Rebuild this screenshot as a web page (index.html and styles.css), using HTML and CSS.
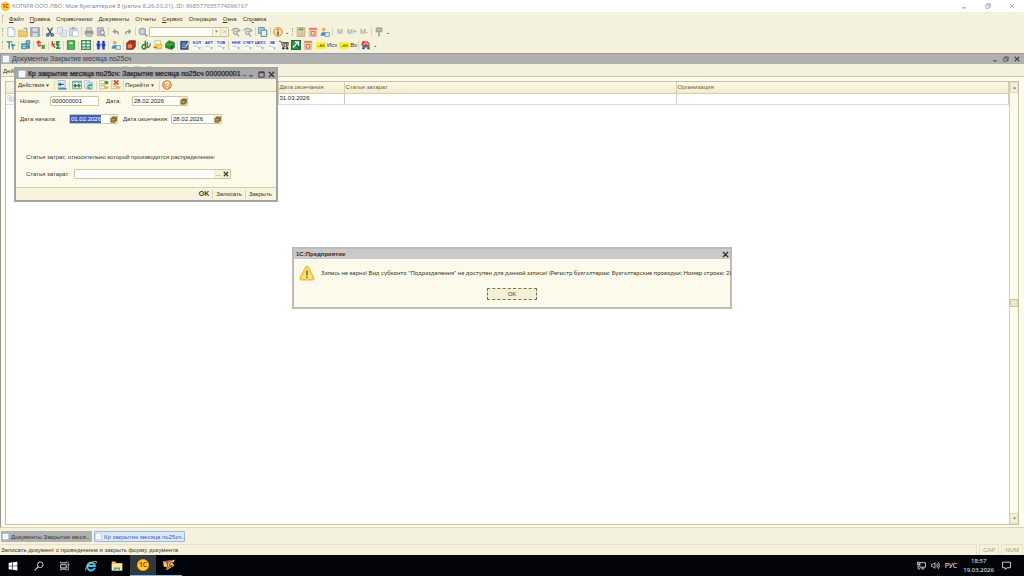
FILE: index.html
```html
<!DOCTYPE html>
<html lang="ru">
<head>
<meta charset="utf-8">
<title>1С:Предприятие</title>
<link rel="stylesheet" href="styles.css">
</head>
<body>
<svg class="sprite" aria-hidden="true">
  <defs>
    <symbol id="logo" viewBox="0 0 16 16"><circle cx="8" cy="8" r="7.500" fill="#fbd02a" stroke="#e8a51c"/><text x="8" y="11" text-anchor="middle" font-size="9" font-weight="bold" fill="#d9261c">1С</text></symbol>
    <symbol id="doc" viewBox="0 0 16 16"><rect x="1" y="1" width="14" height="14" rx="1" fill="#fff" stroke="#86b0d6"/><path d="M3 5h10M3 8h10M3 11h10" stroke="#d5e4f2"/></symbol>
    <symbol id="page" viewBox="0 0 16 16"><path d="M3 1h8l3 3v11H3z" fill="#f8fbff" stroke="#8aa5c0"/><path d="M11 1v3h3" fill="none" stroke="#8aa5c0"/></symbol>
    <symbol id="open" viewBox="0 0 16 16"><path d="M1 5h5l1 2h8v8H1z" fill="#f4cc63" stroke="#c59a38"/><path d="M9 4c1-3 4-3 5-1v3" fill="none" stroke="#4d79a8" stroke-width="1.500"/></symbol>
    <symbol id="save" viewBox="0 0 16 16"><path d="M1 1h14v14H1z" fill="#9eacb6" stroke="#7e8e99"/><path d="M4 2h8v5H4zM4 10h8v5H4z" fill="#d7dfe2"/></symbol>
    <symbol id="cut" viewBox="0 0 16 16"><path d="M4 1l6 10M12 1L6 11" stroke="#46576a" stroke-width="2"/><circle cx="4.500" cy="12.500" r="2" fill="none" stroke="#2f5a86" stroke-width="2"/><circle cx="11.500" cy="12.500" r="2" fill="none" stroke="#2f5a86" stroke-width="2"/></symbol>
    <symbol id="copy" viewBox="0 0 16 16"><path d="M1 1h8v10H1zM6 5h9v10H6z" fill="#eff4f8" stroke="#a3b5c5"/><path d="M8 9h5M8 12h5" stroke="#bccbd8"/></symbol>
    <symbol id="paste" viewBox="0 0 16 16"><path d="M1 2h12v12H1z" fill="#ced8df" stroke="#9eafbd"/><path d="M5 0h4v4H5z" fill="#9eafbd"/><path d="M6 6h9v9H6z" fill="#fff" stroke="#a3b5c5"/></symbol>
    <symbol id="print" viewBox="0 0 16 16"><path d="M4 1h8v5H4z" fill="#d8d8d0" stroke="#999"/><path d="M1 6h14v6H1z" fill="#9b9b94"/><path d="M4 10h8v5H4z" fill="#c9c9c2" stroke="#999"/></symbol>
    <symbol id="preview" viewBox="0 0 16 16"><path d="M2 1h10v13H2z" fill="#bac0c8" stroke="#8d97a3"/><circle cx="10" cy="9" r="3.500" fill="#dfe3e5" stroke="#7f8b98" stroke-width="1.500"/><path d="M12 12l3 3" stroke="#7f8b98" stroke-width="2"/></symbol>
    <symbol id="undo" viewBox="0 0 16 16"><path d="M3 7h6c4 0 4 3 3 6M7 3L3 7l4 4" fill="none" stroke="#95968d" stroke-width="2.500"/></symbol>
    <symbol id="find" viewBox="0 0 16 16"><circle cx="7" cy="7" r="5" fill="#cbd3d8" stroke="#9aa6ae" stroke-width="2"/><path d="M11 11l4 4" stroke="#9aa6ae" stroke-width="3"/></symbol>
    <symbol id="findnext" viewBox="0 0 16 16"><path d="M1 6c3-5 10-5 13 0M11 3l3 3-4 1" fill="none" stroke="#9b9b93" stroke-width="2"/><circle cx="7" cy="9" r="3" fill="#d6dcd9" stroke="#9b9b93" stroke-width="1.500"/><path d="M9 11l4 4" stroke="#9b9b93" stroke-width="2"/></symbol>
    <symbol id="windows" viewBox="0 0 16 16"><path d="M1 1h9v9H1z" fill="#bcd3e6" stroke="#5482a8" stroke-width="1.500"/><path d="M5 5h9v10H5z" fill="#e9f4fb" stroke="#47799f" stroke-width="1.500"/></symbol>
    <symbol id="info" viewBox="0 0 16 16"><circle cx="8" cy="8" r="7" fill="#f6d9a4" stroke="#c99143" stroke-width="1.500"/><path d="M8 7v6M8 3v2" stroke="#7c5830" stroke-width="2.500"/></symbol>
    <symbol id="help" viewBox="0 0 16 16"><circle cx="8" cy="8" r="7" fill="#f0ae6b" stroke="#c77e42" stroke-width="1.500"/><path d="M5.500 6c0-4 6-3 5 0-.5 1.500-2.500 1.500-2.500 4M8 11.500v2" fill="none" stroke="#fff" stroke-width="1.800"/></symbol>
    <symbol id="calc" viewBox="0 0 16 16"><path d="M2 1h12v14H2z" fill="#eee2bd" stroke="#a08d59"/><path d="M4 4h8" stroke="#6c9361" stroke-width="3"/><path d="M4 8h8M4 11h8M4 13h8" stroke="#a66f42" stroke-dasharray="2 1"/></symbol>
    <symbol id="calendar" viewBox="0 0 16 16"><path d="M2 2h12v13H2z" fill="#f7d9c2" stroke="#cf9478"/><path d="M2 3h12" stroke="#dd8263" stroke-width="3"/><path d="M5 7h6v6H5z" fill="none" stroke="#d15f37" stroke-width="1.500"/></symbol>
    <symbol id="user" viewBox="0 0 16 16"><circle cx="6" cy="4" r="3" fill="#e9ae58"/><path d="M1 14c0-8 9-8 10 0z" fill="#4b91bf"/><path d="M8 9h7v6H8z" fill="#ddeaf4" stroke="#477ba1"/></symbol>
    <symbol id="wrench" viewBox="0 0 16 16"><path d="M4 2h8v5H4zM8 6v9" fill="#c4c4bb" stroke="#a4a49b" stroke-width="2.500"/></symbol>
    <symbol id="tt" viewBox="0 0 16 16"><path d="M1 3h9M5 3v11M8 8h7M11 8v7M10 8V6" stroke="#3584a2" stroke-width="2" fill="none"/></symbol>
    <symbol id="blocks" viewBox="0 0 16 16"><path d="M1 6h8v8H1z" fill="#58a5c4" stroke="#2b7192"/><path d="M8 1h6v5H8z" fill="#80b9cd" stroke="#2b7192"/><path d="M10 7h4v7h-4z" fill="#397ea2"/><path d="M3 9h4M3 12h4" stroke="#fff"/></symbol>
    <symbol id="redgreen" viewBox="0 0 16 16"><path d="M1 5l3-3 4 3M4 2v7h4" fill="none" stroke="#df4b37" stroke-width="2.500"/><path d="M9 8l5 6M14 8l-5 6" stroke="#349a43" stroke-width="2.500"/></symbol>
    <symbol id="greenred" viewBox="0 0 16 16"><path d="M2 2v6l5 4M2 9l4-3" fill="none" stroke="#d7402d" stroke-width="2.500"/><path d="M14 3H9v5h5M8 13h7M11 3v10" fill="none" stroke="#279b47" stroke-width="2.500"/></symbol>
    <symbol id="book" viewBox="0 0 16 16"><path d="M2 1h12v14H2z" fill="#3fa64c" stroke="#277b36"/><path d="M5 3h6v4H5z" fill="#bde4b6"/><path d="M4 10h8M4 13h8" stroke="#87cf7e"/></symbol>
    <symbol id="sheet" viewBox="0 0 16 16"><path d="M1 1h14v14H1z" fill="#e8f4e4" stroke="#44824d" stroke-width="2"/><path d="M1 6h14M1 11h14M8 1v14" stroke="#3d9472" stroke-width="2"/></symbol>
    <symbol id="people" viewBox="0 0 16 16"><circle cx="4" cy="3" r="2" fill="#142dbb"/><circle cx="12" cy="3" r="2" fill="#142dbb"/><path d="M1 5h6v5H6v5H2v-5H1zM9 5h6v5h-1v5h-4v-5H9z" fill="#203dce"/></symbol>
    <symbol id="redbook" viewBox="0 0 16 16"><path d="M1 5l4-4h10v10l-4 4H1z" fill="#b8391e" stroke="#6c2117"/><path d="M3 7h7v6H3z" fill="#ed874f"/><path d="M5 3h9M11 5v9" stroke="#6c2117"/></symbol>
    <symbol id="dtkt" viewBox="0 0 16 16"><path d="M7 1v13H3c-3-5 1-8 4-6" fill="none" stroke="#268b35" stroke-width="2.500"/><path d="M10 3v6c0 4 5 2 5-4" fill="none" stroke="#268b35" stroke-width="2"/><path d="M8 12h5" stroke="#d05138" stroke-width="2"/></symbol>
    <symbol id="note" viewBox="0 0 16 16"><path d="M3 1h9v9H3z" fill="#f7f6e9" stroke="#a8ab95"/><path d="M5 7h9v7H5z" fill="#f1df38" stroke="#b8a735"/><path d="M1 12h5" stroke="#d0572c" stroke-width="2"/></symbol>
    <symbol id="cube" viewBox="0 0 16 16"><path d="M1 6l5-5 9 3v8l-5 3-9-3z" fill="#2a912c" stroke="#156219"/><path d="M1 6l8 2 6-4M9 8v7" stroke="#77ce5b" fill="none"/><path d="M9 9h3v5H9z" fill="#163c68"/></symbol>
    <symbol id="edit" viewBox="0 0 16 16"><path d="M1 2h12v13H1z" fill="#355d9e" stroke="#203c7c"/><path d="M3 6h6M3 9h5M3 12h8" stroke="#b9d2f1"/><path d="M8 10L14 2l2 2-7 8z" fill="#f2efd9" stroke="#777"/></symbol>
    <symbol id="cart" viewBox="0 0 16 16"><path d="M0 2h3l3 8h8l1-6H4M6 6h9M8 4v6M12 4v6" fill="none" stroke="#555951" stroke-width="1.500"/><circle cx="7" cy="13" r="2" fill="#333"/><circle cx="13" cy="13" r="2" fill="#333"/></symbol>
    <symbol id="greenedit" viewBox="0 0 16 16"><path d="M1 1h14v14H1z" fill="#29a241" stroke="#15712a" stroke-width="2"/><path d="M3 12l9-9M6 3h6v6" fill="none" stroke="#fff" stroke-width="2"/><path d="M8 8l5 5" stroke="#194a89" stroke-width="2"/></symbol>
    <symbol id="redcar" viewBox="0 0 16 16"><path d="M3 2l8 1 3 5-7 3-6-3z" fill="#d7443e" stroke="#a72e2d"/><path d="M2 11h12" stroke="#3d66a4" stroke-width="2"/><path d="M4 8l4-4 4 4" fill="none" stroke="#fff" stroke-width="1.500"/><circle cx="4" cy="13" r="2" fill="#3665a8"/><circle cx="12" cy="13" r="2" fill="#3665a8"/></symbol>
    <symbol id="saveclose" viewBox="0 0 16 16"><path d="M2 1h11v11H2z" fill="#e7f0f7" stroke="#81a0bb"/><path d="M3 7h8M6 5L3 7l3 2M2 14h13" fill="none" stroke="#2668a0" stroke-width="2"/></symbol>
    <symbol id="swap" viewBox="0 0 16 16"><path d="M1 2h14v12H1z" fill="#edf4ef" stroke="#6c9d9a" stroke-width="1.500"/><path d="M1 3h14" stroke="#6298b8" stroke-width="2"/><path d="M2 9h4M10 9h4M4 6l3 3-3 3M12 6L9 9l3 3" fill="none" stroke="#2b7b4b" stroke-width="2"/></symbol>
    <symbol id="refresh" viewBox="0 0 16 16"><path d="M1 1h8v12H1zM5 4h9v11H5z" fill="#edf5f8" stroke="#8ba8bd"/><path d="M12 9a3 3 0 1 0 0 3M12 6v3H9" fill="none" stroke="#34a35f" stroke-width="1.800"/></symbol>
    <symbol id="post" viewBox="0 0 16 16"><path d="M1 1h8v13H1z" fill="#f8f1d8" stroke="#c0aa6e"/><path d="M3 6h5M3 9h5" stroke="#7194b4"/><circle cx="12" cy="4" r="3" fill="#39a342"/><path d="M8 12h7" stroke="#e9b642" stroke-width="4"/></symbol>
    <symbol id="unpost" viewBox="0 0 16 16"><path d="M1 1h8v13H1z" fill="#f8f1d8" stroke="#c0aa6e"/><path d="M3 7h5M3 10h5" stroke="#7194b4"/><path d="M5 1l7 6M12 1L5 7" stroke="#d64a3e" stroke-width="2.500"/><path d="M8 12h7" stroke="#e9b642" stroke-width="4"/></symbol>
    <symbol id="pick" viewBox="0 0 16 16"><path d="M5 2h10v9H5zM2 5h10v9H2z" fill="#a68b36" stroke="#65521c" stroke-width="1.500"/><path d="M4 9h6" stroke="#f8ebb5" stroke-width="1.500"/></symbol>
    <symbol id="min" viewBox="0 0 16 16"><path d="M3 13h10" stroke="currentColor" stroke-width="2.500"/></symbol>
    <symbol id="max" viewBox="0 0 16 16"><path d="M2 2h12v12H2zM2 4h12" fill="none" stroke="currentColor" stroke-width="2"/></symbol>
    <symbol id="restore" viewBox="0 0 16 16"><path d="M2 5h9v9H2zM5 5V2h9v9h-3" fill="none" stroke="currentColor" stroke-width="1.800"/></symbol>
    <symbol id="close" viewBox="0 0 16 16"><path d="M2 2l12 12M14 2L2 14" stroke="currentColor" stroke-width="3"/></symbol>
    <symbol id="closethin" viewBox="0 0 16 16"><path d="M2 2l12 12M14 2L2 14" stroke="currentColor" stroke-width="1.500"/></symbol>
    <symbol id="warn" viewBox="0 0 32 32"><path d="M16 2q2 0 3 2l11 22q1 4-2 4H4q-3 0-2-4L13 4q1-2 3-2z" fill="#f9d44c" stroke="#d6a934" stroke-width="1.500"/><path d="M16 6L5 27h22z" fill="#fce27b"/><path d="M16 11v10M16 23v3" stroke="#776236" stroke-width="3"/></symbol>
    <symbol id="win" viewBox="0 0 16 16"><path d="M1 3l6-1v5.500H1zM8 2l7-1v6.500H8zM1 8.500h6V14l-6-1zM8 8.500h7V15l-7-1z" fill="#fff"/></symbol>
    <symbol id="search" viewBox="0 0 16 16"><circle cx="10" cy="6" r="4.500" fill="none" stroke="#ddd" stroke-width="1.500"/><path d="M7 9l-6 6" stroke="#ddd" stroke-width="1.700"/></symbol>
    <symbol id="taskview" viewBox="0 0 16 16"><path d="M1 1v2h9V1M1 6h9v5H1zM1 15v-2h9v2M13 1v3M13 8v7" fill="none" stroke="#ddd" stroke-width="1.500"/><path d="M12 5h3v2h-3z" fill="#ddd"/></symbol>
    <symbol id="ie" viewBox="0 0 16 16"><path d="M13 10.500A5.200 5.200 0 1 1 13.300 8H4" fill="none" stroke="#3cc0ee" stroke-width="2.600"/><path d="M1 14C-1 10 9 1 15 2c1 1 0 2-1 3" fill="none" stroke="#f3cf45" stroke-width="1.200"/></symbol>
    <symbol id="folder" viewBox="0 0 16 16"><path d="M1 2h5l1 2h8v10H1z" fill="#efbe4f"/><path d="M1 5h14v9H1z" fill="#fbe39a"/><path d="M4 14v-4h8v4h-2v-2H6v2z" fill="#3fa4dc"/></symbol>
    <symbol id="config" viewBox="0 0 16 16"><path d="M0 3l16-2-3 5 2 3-11 6 1-4-4-1z" fill="#f7da41"/><text x="8" y="10" text-anchor="middle" font-size="9" font-weight="bold" font-style="italic" fill="#8b247c">1С</text><path d="M1 4l12-2M4 13l9-5" stroke="#7d2a80" stroke-width="1.300"/></symbol>
    <symbol id="net" viewBox="0 0 16 16"><path d="M5 3h10v8H5zM8 14h5M10 11v3M1 2v4h3V2zM2 6v8h4" fill="none" stroke="#eee" stroke-width="1.400"/></symbol>
    <symbol id="sound" viewBox="0 0 16 16"><path d="M1 6h2l4-3v10l-4-3H1zM9 6q2 2 0 4M11 4q4 4 0 8M13 2q5 6 0 12" fill="none" stroke="#eee" stroke-width="1.300"/></symbol>
    <symbol id="bubble" viewBox="0 0 16 16"><path d="M1 2h14v10H9l-3 3v-3H1z" fill="none" stroke="#eee" stroke-width="1.500"/></symbol>
    <symbol id="down" viewBox="0 0 16 16"><path d="M3 5h10l-5 7z" fill="currentColor"/></symbol>
    <symbol id="up" viewBox="0 0 16 16"><path d="M3 12h10L8 5z" fill="currentColor"/></symbol>
    <symbol id="arrow" viewBox="0 0 16 8"><path d="M2 2h8M10 4h4l-2 3z" stroke="#b3bfdf" fill="#b3bfdf" stroke-width="1.500"/></symbol>
  </defs>
</svg>

<header class="titlebar">
  <svg class="ic9"><use href="#logo"/></svg>
  <h1 class="titlebar-text">КОПИЯ ООО ЛВО: Моя бухгалтерия 8 (релиз 8.26.03.01). ID: 968577655774096167</h1>
  <div class="titlebar-controls">
    <button aria-label="Свернуть"><svg class="ic6"><use href="#min"/></svg></button>
    <button aria-label="Восстановить"><svg class="ic6"><use href="#restore"/></svg></button>
    <button aria-label="Закрыть"><svg class="ic6"><use href="#closethin"/></svg></button>
  </div>
</header>

<nav class="menubar">
  <span class="grip"></span>
  <button><u>Ф</u>айл</button><button><u>П</u>равка</button><button>Справочники</button><button>Документы</button><button>Отчеты</button><button><u>С</u>ервис</button><button>Операции</button><button><u>О</u>кна</button><button>Сп<u>р</u>авка</button>
</nav>

<div class="toolbar">
  <span class="grip"></span>
  <button class="tool" aria-label="Новый"><svg><use href="#page"/></svg></button>
  <button class="tool" aria-label="Открыть"><svg><use href="#open"/></svg></button>
  <button class="tool" aria-label="Сохранить"><svg><use href="#save"/></svg></button>
  <span class="sep"></span>
  <button class="tool" aria-label="Вырезать"><svg><use href="#cut"/></svg></button>
  <button class="tool" aria-label="Копировать"><svg><use href="#copy"/></svg></button>
  <button class="tool" aria-label="Вставить"><svg><use href="#paste"/></svg></button>
  <span class="sep"></span>
  <button class="tool" aria-label="Печать"><svg><use href="#print"/></svg></button>
  <button class="tool" aria-label="Просмотр"><svg><use href="#preview"/></svg></button>
  <span class="sep"></span>
  <button class="tool small" aria-label="Отменить"><svg><use href="#undo"/></svg></button>
  <button class="tool small flip" aria-label="Вернуть"><svg><use href="#undo"/></svg></button>
  <span class="sep"></span>
  <button class="tool" aria-label="Найти"><svg><use href="#find"/></svg></button>
  <div class="searchbox">
    <input type="text" aria-label="Поиск">
    <button aria-label="Список"><svg class="ic5"><use href="#down"/></svg></button>
    <button aria-label="Очистить"><svg class="ic5"><use href="#closethin"/></svg></button>
  </div>
  <button class="tool" aria-label="Найти следующий"><svg><use href="#findnext"/></svg></button>
  <button class="tool" aria-label="Найти предыдущий"><svg><use href="#findnext"/></svg></button>
  <span class="sep"></span>
  <button class="tool" aria-label="Окна"><svg><use href="#windows"/></svg></button>
  <span class="sep"></span>
  <button class="tool" aria-label="Справка"><svg><use href="#info"/></svg></button>
  <span class="more">.</span>
  <span class="grip"></span>
  <button class="tool" aria-label="Калькулятор"><svg><use href="#calc"/></svg></button>
  <button class="tool" aria-label="Календарь"><svg><use href="#calendar"/></svg></button>
  <button class="tool" aria-label="Пользователи"><svg><use href="#user"/></svg></button>
  <span class="sep"></span>
  <button class="tool mem">M</button>
  <button class="tool mem">M+</button>
  <button class="tool mem">M-</button>
  <span class="sep"></span>
  <button class="tool" aria-label="Настройка"><svg><use href="#wrench"/></svg></button>
  <span class="more">.</span>
</div>

<div class="toolbar toolbar-main">
  <span class="grip"></span>
  <button class="tool" aria-label="План счетов"><svg><use href="#tt"/></svg></button><span class="sep"></span>
  <button class="tool" aria-label="Организации"><svg><use href="#blocks"/></svg></button><span class="sep"></span>
  <button class="tool" aria-label="Проводки"><svg><use href="#redgreen"/></svg></button><span class="sep"></span>
  <button class="tool" aria-label="Операции"><svg><use href="#greenred"/></svg></button><span class="sep"></span>
  <button class="tool" aria-label="Журнал"><svg><use href="#book"/></svg></button><span class="sep"></span>
  <button class="tool" aria-label="Ведомость"><svg><use href="#sheet"/></svg></button><span class="sep"></span>
  <button class="tool" aria-label="Сотрудники"><svg><use href="#people"/></svg></button><span class="sep"></span>
  <button class="tool" aria-label="Контрагенты"><svg><use href="#user"/></svg></button><span class="sep"></span>
  <button class="tool" aria-label="Книга"><svg><use href="#redbook"/></svg></button><span class="sep"></span>
  <button class="tool" aria-label="Дебет и кредит"><svg><use href="#dtkt"/></svg></button>
  <button class="tool" aria-label="Заметка"><svg><use href="#note"/></svg></button>
  <button class="tool" aria-label="Склад"><svg><use href="#cube"/></svg></button>
  <span class="sep"></span>
  <button class="tool" aria-label="Изменить"><svg><use href="#edit"/></svg></button>
  <button class="tool tag">КОЛ<svg><use href="#arrow"/></svg></button>
  <button class="tool tag">АКТ<svg><use href="#arrow"/></svg></button>
  <button class="tool tag">ТОВ<svg><use href="#arrow"/></svg></button>
  <span class="sep"></span>
  <button class="tool tag">ННИ<svg><use href="#arrow"/></svg></button>
  <button class="tool tag">СЧЕТ<svg><use href="#arrow"/></svg></button>
  <button class="tool tag">ЦЕХ1<svg><use href="#arrow"/></svg></button>
  <button class="tool tag">ЭВ<svg><use href="#arrow"/></svg></button>
  <button class="tool" aria-label="Покупки"><svg><use href="#cart"/></svg></button>
  <button class="tool" aria-label="Отчет"><svg><use href="#greenedit"/></svg></button>
  <button class="tool" aria-label="Календарь операций"><svg><use href="#calendar"/></svg></button>
  <button class="flag"><span class="flag-mark">+АВ</span>Исх</button>
  <button class="flag"><span class="flag-mark">+АВ</span>Вх</button>
  <span class="sep"></span>
  <button class="tool" aria-label="Транспорт"><svg><use href="#redcar"/></svg></button>
  <span class="more">.</span>
</div>

<main class="child">
  <div class="child-title">
    <svg class="ic8"><use href="#doc"/></svg>
    <h2 class="child-name">Документы Закрытие месяца по25сч</h2>
    <button aria-label="Свернуть"><svg class="ic6"><use href="#min"/></svg></button>
    <button aria-label="Восстановить"><svg class="ic6"><use href="#restore"/></svg></button>
    <button aria-label="Закрыть"><svg class="ic6"><use href="#close"/></svg></button>
  </div>
  <div class="child-tools">
    <button class="child-actions">Действия</button>
    <button class="tool" aria-label="Найти"><svg><use href="#find"/></svg></button>
    <button class="tool" aria-label="Копировать"><svg><use href="#copy"/></svg></button>
    <button class="tool" aria-label="Обновить"><svg><use href="#refresh"/></svg></button>
    <button class="tool" aria-label="Провести"><svg><use href="#copy"/></svg></button>
  </div>
  <div class="list">
    <div class="list-body">
      <table class="grid">
        <colgroup><col class="col-first"><col class="col-end"><col class="col-item"><col></colgroup>
        <thead><tr><th></th><th>Дата окончания</th><th>Статья затарат</th><th>Организация</th></tr></thead>
        <tbody><tr><td><svg class="ic7"><use href="#copy"/></svg></td><td>31.03.2026</td><td></td><td></td></tr></tbody>
      </table>
    </div>
    <div class="scroll">
      <button aria-label="Вверх"><svg class="ic5"><use href="#up"/></svg></button>
      <span class="thumb"></span>
      <button aria-label="Вниз"><svg class="ic5"><use href="#down"/></svg></button>
    </div>
  </div>
</main>

<nav class="tabs">
  <button class="tab"><svg class="ic7"><use href="#doc"/></svg>Документы Закрытие меся..</button>
  <button class="tab active"><svg class="ic7"><use href="#doc"/></svg>Кр закрытие месяца по25сч..</button>
</nav>
<footer class="status">
  <span class="status-text">Записать документ с проведением и закрыть форму документа</span>
  <span class="status-key">CAP</span><span class="status-key">NUM</span>
</footer>

<div class="taskbar">
  <button class="task" aria-label="Пуск"><svg class="ic10"><use href="#win"/></svg></button>
  <button class="task" aria-label="Поиск"><svg class="ic10"><use href="#search"/></svg></button>
  <button class="task" aria-label="Представление задач"><svg class="ic10"><use href="#taskview"/></svg></button>
  <button class="task" aria-label="Internet Explorer"><svg class="ic12"><use href="#ie"/></svg></button>
  <button class="task" aria-label="Проводник"><svg class="ic12"><use href="#folder"/></svg></button>
  <button class="task current" aria-label="1С:Предприятие"><svg class="ic12"><use href="#logo"/></svg></button>
  <button class="task running" aria-label="Конфигуратор"><svg class="ic12"><use href="#config"/></svg></button>
  <div class="tray">
    <svg class="ic9"><use href="#net"/></svg>
    <svg class="ic9"><use href="#sound"/></svg>
    <span class="lang">РУС</span>
    <time class="clock">18:57<br>19.03.2026</time>
    <svg class="ic9"><use href="#bubble"/></svg>
  </div>
</div>

<section class="window form-window" role="dialog" aria-labelledby="form-title">
  <div class="window-title">
    <svg class="ic8"><use href="#doc"/></svg>
    <h2 id="form-title">Кр закрытие месяца по25сч: Закрытие месяца по25сч 000000001 ..</h2>
    <button aria-label="Свернуть"><svg class="ic6"><use href="#min"/></svg></button>
    <button aria-label="Развернуть"><svg class="ic7"><use href="#max"/></svg></button>
    <button aria-label="Закрыть"><svg class="ic7"><use href="#close"/></svg></button>
  </div>
  <div class="form-tools">
    <button class="drop">Действия<svg class="ic5"><use href="#down"/></svg></button><span class="sep"></span>
    <button class="tool" aria-label="Записать и закрыть"><svg><use href="#saveclose"/></svg></button><span class="sep"></span>
    <button class="tool" aria-label="Найти в списке"><svg><use href="#swap"/></svg></button>
    <button class="tool" aria-label="Обновить"><svg><use href="#refresh"/></svg></button><span class="sep"></span>
    <button class="tool" aria-label="Провести"><svg><use href="#post"/></svg></button>
    <button class="tool" aria-label="Отменить проведение"><svg><use href="#unpost"/></svg></button><span class="sep"></span>
    <button class="drop">Перейти<svg class="ic5"><use href="#down"/></svg></button><span class="sep"></span>
    <button class="tool" aria-label="Справка"><svg><use href="#help"/></svg></button>
  </div>
  <form class="form">
    <div class="form-row">
      <label class="label-number" for="num">Номер:</label>
      <span class="field field-short"><input id="num" type="text" value="000000001"></span>
      <label class="label-date" for="date">Дата:</label>
      <span class="field field-date"><input id="date" type="text" value="28.02.2026"><button type="button" aria-label="Выбрать"><svg class="ic7"><use href="#pick"/></svg></button></span>
    </div>
    <div class="form-row">
      <label class="label-start" for="start">Дата начала:</label>
      <span class="field field-short selected"><input id="start" type="text" value="01.02.2026"><button type="button" aria-label="Выбрать"><svg class="ic7"><use href="#pick"/></svg></button></span>
      <label class="label-end" for="end">Дата окончания:</label>
      <span class="field field-end"><input id="end" type="text" value="28.02.2026"><button type="button" aria-label="Выбрать"><svg class="ic7"><use href="#pick"/></svg></button></span>
    </div>
    <p class="hint">Статья затрат, относительно которой производится распределение:</p>
    <div class="form-row item-row">
      <label class="label-item" for="item">Статья затарат:</label>
      <span class="field field-item"><input id="item" type="text"><button type="button">...</button><button type="button" aria-label="Очистить"><svg class="ic6"><use href="#close"/></svg></button></span>
    </div>
  </form>
  <div class="form-footer"><button class="strong">OK</button><span class="sep"></span><button>Записать</button><span class="sep"></span><button>Закрыть</button></div>
</section>

<section class="window message" role="alertdialog" aria-labelledby="msg-title">
  <div class="window-title">
    <h2 id="msg-title">1С:Предприятие</h2>
    <button aria-label="Закрыть"><svg class="ic7"><use href="#close"/></svg></button>
  </div>
  <div class="message-body">
    <svg class="ic16"><use href="#warn"/></svg>
    <p>Запись не верна! Вид субконто "Подразделения" не доступен для данной записи! (Регистр бухгалтерии: Бухгалтерские проводки; Номер строки: 2)</p>
  </div>
  <button class="message-ok">OK</button>
</section>
</body>
</html>
```
FILE: styles.css
```css
* { box-sizing: border-box; }
html, body { height: 100%; }
body {
  margin: 0;
  display: flex;
  flex-direction: column;
  overflow: hidden;
  position: relative;
  background: #f4f1dc;
  color: #40361f;
  font: 6px/10px "Liberation Sans", Arial, sans-serif;
  white-space: nowrap;
}
h1, h2, p { margin: 0; font-size: inherit; font-weight: normal; }
button { display: flex; align-items: center; justify-content: center; margin: 0; padding: 0; border: 0; background: none; color: inherit; font: inherit; }
input { min-width: 0; border: 0; outline: 0; padding: 0; background: none; color: #222; font: inherit; }
svg { display: block; flex: none; }
u { text-underline-offset: 1px; text-decoration-thickness: 1px; }
.sprite { position: absolute; width: 0; height: 0; }
.ic5 { width: 5px; height: 5px; }
.ic6 { width: 6px; height: 6px; }
.ic7 { width: 7px; height: 7px; }
.ic8 { width: 8px; height: 8px; }
.ic9 { width: 9px; height: 9px; }
.ic10 { width: 10px; height: 10px; }
.ic12 { width: 12px; height: 12px; }
.ic16 { width: 16px; height: 16px; }

.titlebar { display: flex; align-items: center; flex: none; height: 12px; padding-left: 1px; background: #fff; color: #8a8a8a; font-family: "Noto Sans", sans-serif; }
.titlebar-text { flex: 1; padding-left: 2px; }
.titlebar-controls { display: flex; }
.titlebar-controls button { width: 24px; }

.menubar { display: flex; align-items: center; flex: none; height: 13px; gap: 6px; }
.menubar .grip { margin-right: -4px; }
.grip { flex: none; width: 5px; height: 8px; border-left: 1px dotted #b3a880; margin-left: 2px; margin-right: -2px; }
.toolbar { display: flex; align-items: center; flex: none; height: 13px; }
.toolbar-main { height: 14px; margin-bottom: 1px; }
.tool { flex: none; width: 12px; height: 12px; }
.tool svg { width: 10px; height: 10px; }
.tool.small svg { width: 8px; height: 8px; }
.flip { transform: scaleX(-1); }
.sep { flex: none; width: 1px; height: 9px; margin: 0 1px; background: #dcd6b8; }
.more { width: 6px; text-align: center; font-weight: bold; font-size: 8px; }
.mem { color: #98968a; font-size: 7px; }
.tag.tool { flex-direction: column; border: 1px solid #f4f1dc; background: #fbfaf3; color: #2a35b0; font-size: 4px; line-height: 5px; font-weight: bold; }
.tag.tool svg { width: 10px; height: 5px; }
.flag { gap: 1px; margin-left: 2px; }
.flag-mark { width: 10px; background: #fbf42b; color: #5b5320; font-size: 4px; line-height: 7px; text-align: center; }
.searchbox { display: flex; width: 80px; height: 10px; margin-right: 1px; border: 1px solid #c9c19c; border-radius: 1px; background: #fffef8; }
.searchbox input { flex: 1; }
.searchbox button { width: 8px; border-left: 1px solid #ddd6b6; background: #f6f3de; color: #888; }

.child { flex: 1; display: flex; flex-direction: column; min-height: 0; border-left: 1px solid #999; border-bottom: 1px solid #d8d2b4; background: #fcfbee; }
.child-title { display: flex; align-items: center; flex: none; height: 11px; padding: 0 2px 0 1px; border-top: 1px solid #999; background: #b0b0b0; color: #404040; }
.child-name { flex: 1; padding-left: 2px; font-size: 7px; }
.child-title button { width: 11px; }
.child-tools { flex: none; display: flex; height: 13px; padding: 1px 0 0 2px; border-bottom: 1px solid #cfc79f; background: #f4f1dc; }
.child-actions { margin-right: 80px; }
.list { flex: 1; display: flex; min-height: 0; margin: 4px 5px 2px 4px; border: 1px solid #c9c19c; background: #fff; }
.list-body { flex: 1; }
.grid { width: 100%; table-layout: fixed; border-collapse: collapse; }
.col-first { width: 272px; }
.col-end { width: 66px; }
.col-item { width: 332px; }
.grid th, .grid td { height: 11px; padding: 0 1px; text-align: left; font-weight: normal; line-height: 9px; border-right: 1px solid #d5ceb0; }
.grid th { background: linear-gradient(#fbf8e8, #f1ecd0); color: #6f6236; border-bottom: 1px solid #d5ceb0; }
.grid td { color: #222; border-bottom: 1px solid #d5d9e0; }
.scroll { display: flex; flex-direction: column; justify-content: space-between; width: 9px; border-left: 1px solid #d5ceb0; background: #fcfbf0; color: #777; }
.scroll button { height: 11px; border: 1px solid #e2dcc0; background: #f4f1dc; }
.thumb { height: 8px; border: 1px solid #cfc79f; background: #efe9c9; }

.tabs { display: flex; align-items: center; flex: none; height: 16px; padding: 1px 1px 0; gap: 2px; }
.tab { height: 11px; width: 91px; gap: 2px; justify-content: flex-start; padding-left: 1px; background: #b0b0b0; border-radius: 1px; }
.tab.active { border: 1px solid #9db4dc; background: #dce7f8; color: #3d62b5; padding-left: 0; }
.status { display: flex; align-items: center; flex: none; height: 11px; padding: 0 1px; gap: 2px; }
.status-text { flex: 1; border: 1px solid #e6e0c5; border-left: 0; }
.status-key { padding: 0 3px; border: 1px solid #e6e0c5; color: #aaa180; }

.taskbar { display: flex; flex: none; height: 21px; background: #03040a; color: #eee; font-family: "Noto Sans", sans-serif; }
.task { width: 26px; }
.current { background: #34373c; }
.current, .running { border-bottom: 1px solid #76b9ed; }
.tray { display: flex; align-items: center; gap: 5px; margin-left: auto; padding-right: 13px; }
.lang { font-size: 7px; }
.clock { margin: 0 3px 0 1px; text-align: center; line-height: 9px; }

.window { position: absolute; display: flex; flex-direction: column; border: 2px solid #a3a3a3; background: #fcfbeb; }
.window-title { display: flex; align-items: center; flex: none; height: 10px; background: #a9a9a9; color: #2e2e2e; }
.window-title h2 { flex: 1; font-weight: bold; }
.window-title button { width: 11px; }
.form-window { left: 14px; top: 67px; width: 264px; }
.form-window .window-title { padding-left: 2px; }
.form-window .window-title h2 { padding-left: 2px; font-size: 7px; font-weight: normal; text-shadow: 0 0 1px #2e2e2e; }
.form-tools { display: flex; align-items: center; height: 13px; padding-left: 2px; border-bottom: 1px solid #d3cca8; background: #f6f3de; }
.drop { gap: 1px; padding-right: 3px; }
.form { display: flex; flex-direction: column; padding: 4px 4px 0; gap: 8px; }
.form-row { display: flex; align-items: center; height: 10px; }
.field { display: flex; height: 10px; border: 1px solid #cdc59f; border-radius: 1px; background: #fff; }
.field input { flex: 1; padding-left: 1px; }
.field button { flex: none; width: 8px; background: #f6f1d8; }
.field-short { width: 49px; }
.field-date { width: 56px; }
.field-end { width: 51px; }
.field-item { width: 157px; }
.field.selected input { flex: none; width: 31px; margin-right: auto; background: #3f5fc0; color: #fff; }
.label-number { width: 30px; }
.label-date { width: 33px; padding-left: 7px; }
.label-start { width: 49px; }
.label-end { width: 53px; padding-left: 5px; }
.label-item { width: 48px; }
.hint { padding: 20px 0 0 6px; }
.item-row { margin-top: -1px; padding-left: 6px; }
.form-footer { display: flex; align-items: center; justify-content: flex-end; height: 13px; margin-top: 8px; padding-right: 4px; gap: 2px; border-top: 1px solid #d3cca8; background: #f6f3de; }
.strong { font-weight: bold; font-size: 7px; }
.message { left: 292px; top: 247px; width: 440px; height: 62px; border-color: #bcbcbc; }
.message .window-title { padding-left: 2px; background: #c9c9c9; }
.message .window-title button { width: 9px; }
.message-body { display: flex; align-items: center; gap: 6px; padding: 6px 5px 0; font-family: Lato, "Liberation Sans", sans-serif; }
.message-ok { align-self: center; width: 50px; height: 12px; margin-top: 7px; border: 1px dashed #7d7250; background: #f4f0d8; }
```
